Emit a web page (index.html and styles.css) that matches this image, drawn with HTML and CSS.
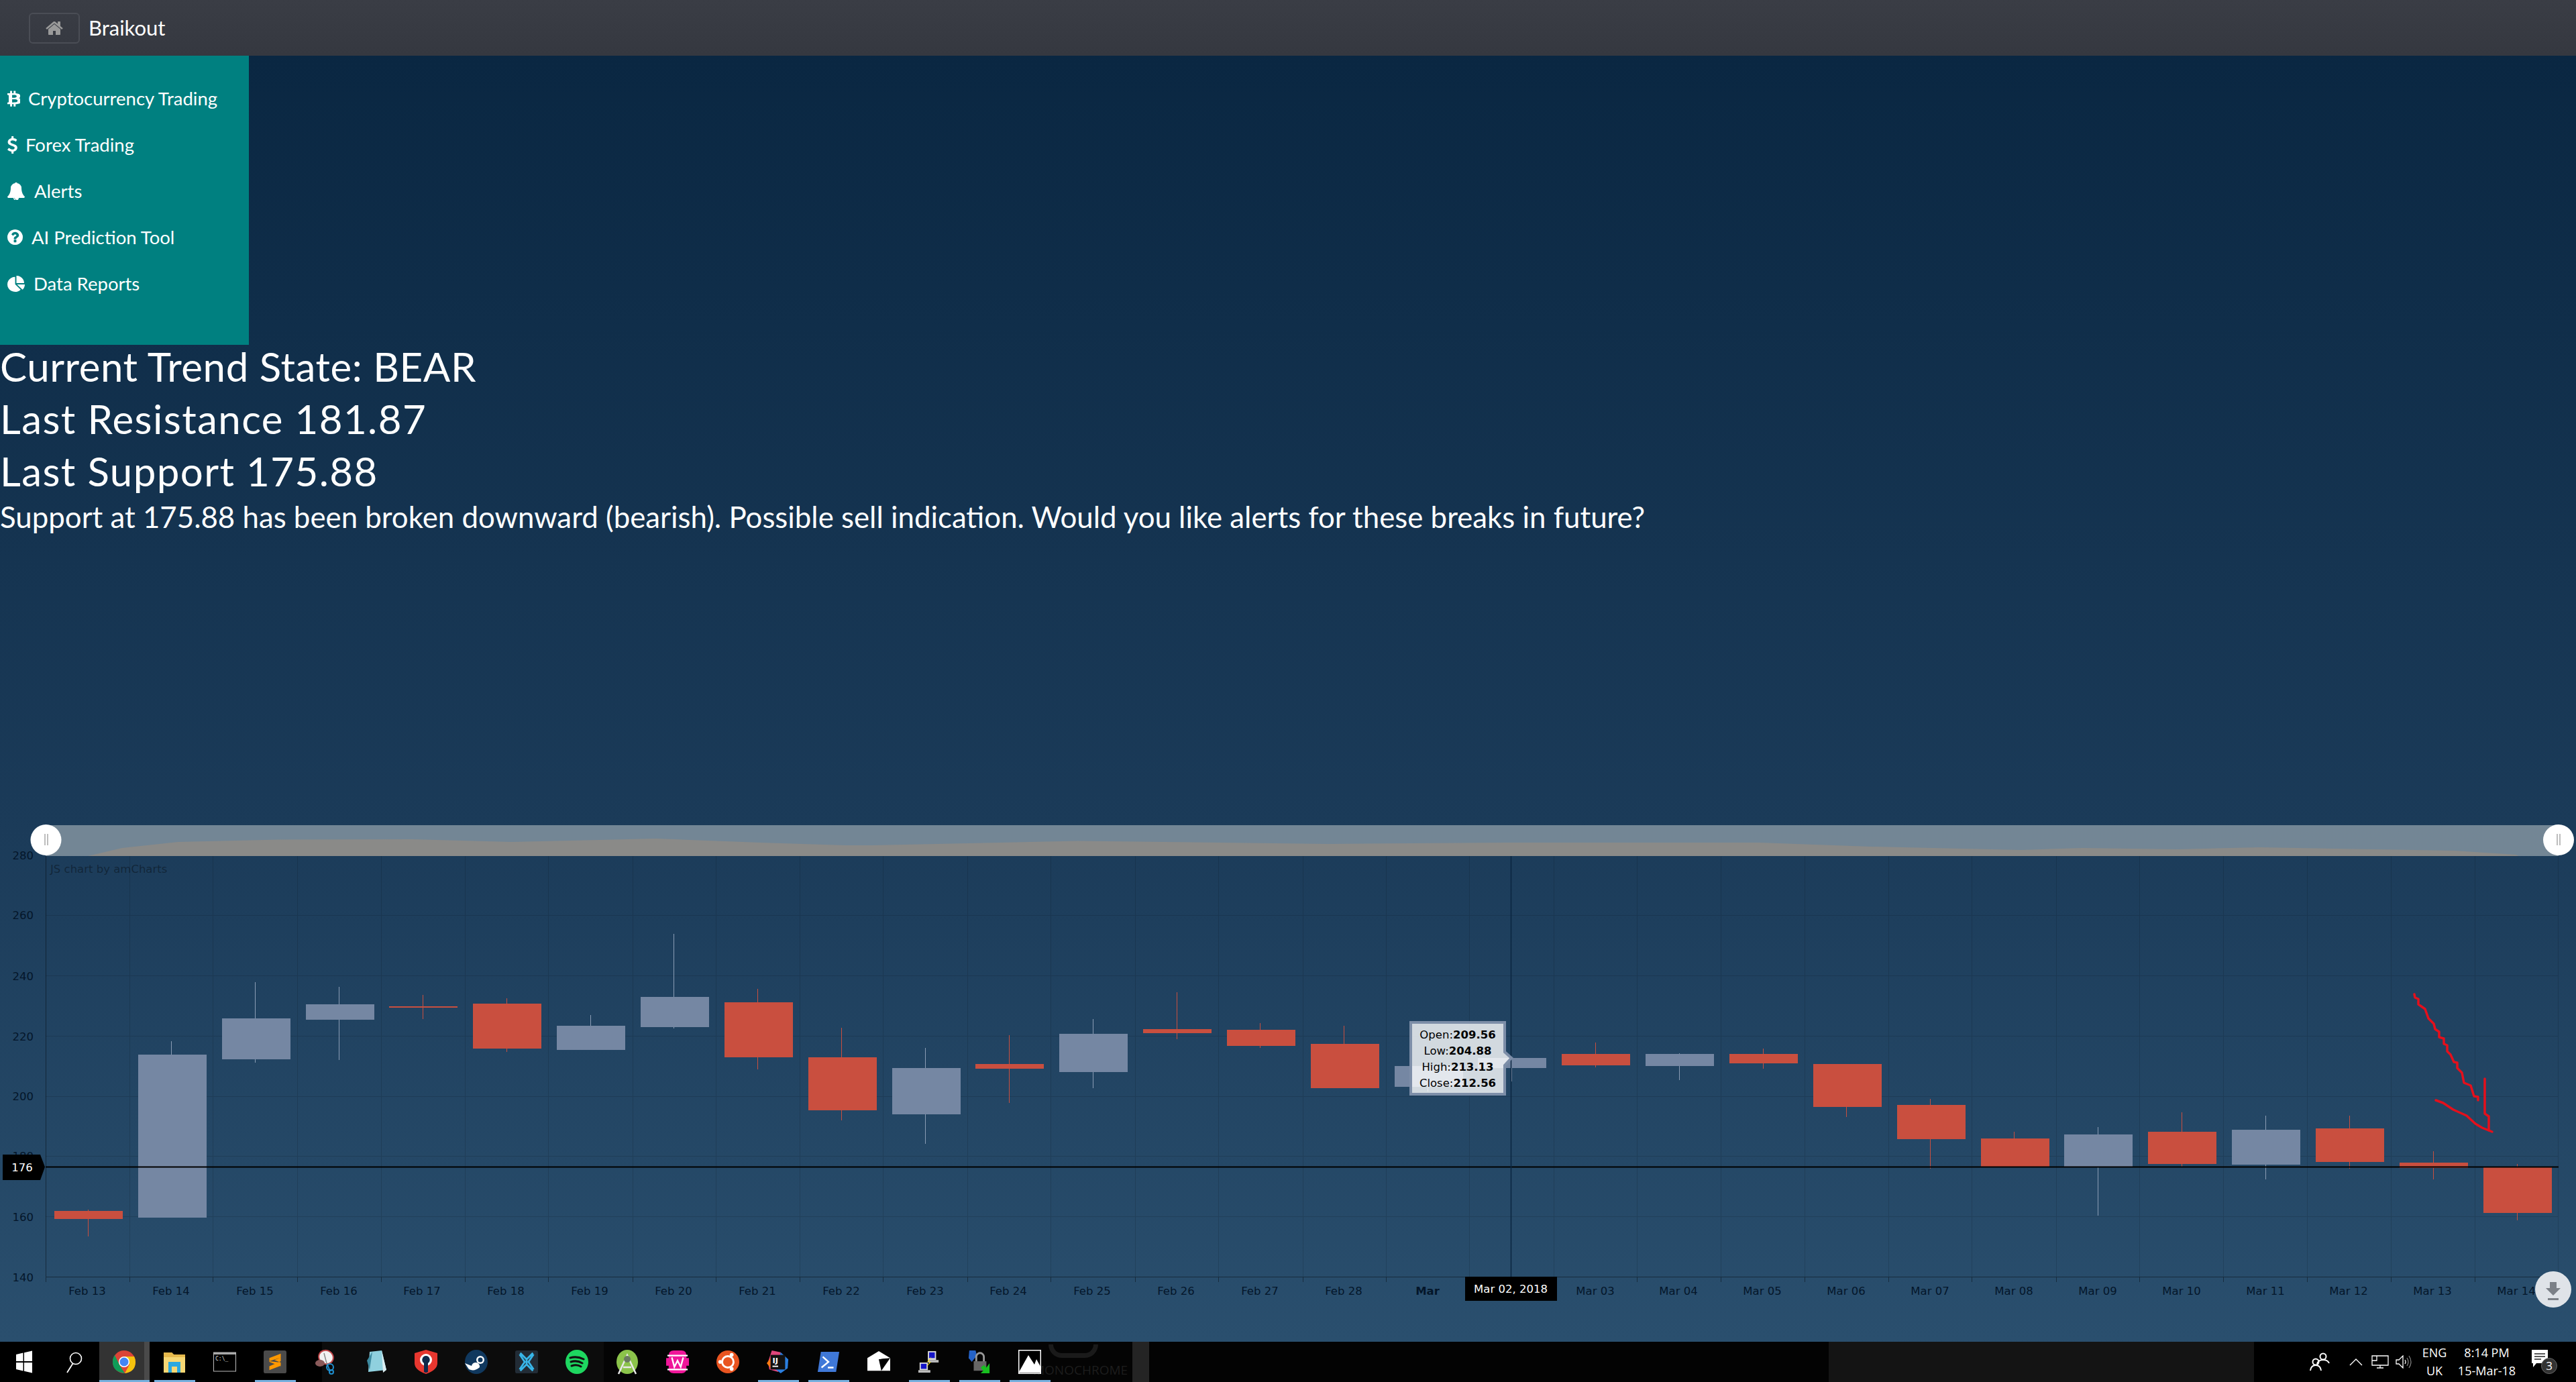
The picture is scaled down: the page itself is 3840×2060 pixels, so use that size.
FILE: index.html
```html
<!DOCTYPE html>
<html lang="en">
<head>
<meta charset="utf-8">
<title>Braikout</title>
<link rel="stylesheet" href="styles.css">
</head>
<body>
<header class="topbar">
  <button class="home-btn"><svg class="home-icon" viewBox="0 0 1792 1792"><path d="M1472 992v480q0 26-19 45t-45 19h-384v-384h-256v384h-384q-26 0-45-19t-19-45v-480q0-1 .5-3t.5-3l575-474 575 474q1 2 1 6zm223-69l-62 74q-8 9-21 11h-3q-13 0-21-7l-692-577-692 577q-12 8-24 7-13-2-21-11l-62-74q-8-10-7-23.500t11-21.500l719-599q32-26 76-26t76 26l244 204v-195q0-14 9-23t23-9h192q14 0 23 9t9 23v408l219 182q10 8 11 21.500t-7 23.500z"/></svg></button>
  <span class="brand">Braikout</span>
</header>

<main class="main">
  <nav class="sidebar">
    <a class="nav-item"><svg class="ico ico-btc" viewBox="150 0 1000 1792" preserveAspectRatio="none"><path d="M1167 621q18 182-131 258 117 28 175 103t45 214q-7 71-32.500 125t-64.500 89-97 58.500-121.500 34.500-145.500 20v255h-154v-251q-80 0-122-1v252h-154v-255q-18 0-54-.5t-55-.5h-200l31-183h111q50 0 58-51v-402h16q-6-1-16-1v-287q-13-68-89-68h-111v-164l212 1q64 0 97-1v-252h154v247q82-2 122-2v-245h154v252q79 7 140 22.500t113 45 82.500 78 36.500 114.500zm-215 545q0-36-15-64t-37-46-57.500-30.500-65.500-18.500-74-9-69-3-64.500 1-47.500 1v338q8 0 37 .5t48 .5 53-1.500 58.500-4 57-8.500 55.500-14 47.500-21 39.500-30 24.500-40 9.500-51zm-71-476q0-33-12.500-58.500t-30.500-42-48-28-55-16.500-61.500-8-58-2.500-54 1-39.500.5v307q5 0 34.500.5t46.500 0 50-2 55-5.500 51.500-11 48.500-18.500 37-27 27-38.500 9-51z"/></svg><span>Cryptocurrency Trading</span></a>
    <a class="nav-item"><svg class="ico ico-usd" viewBox="30 0 960 1792" preserveAspectRatio="none"><path d="M978 1185q0 153-99.500 263.500t-258.500 136.500v175q0 14-9 23t-23 9h-135q-13 0-22.500-9.500t-9.500-22.500v-175q-66-9-127.500-31t-101.500-44.500-74-48-46.500-37.500-17.500-18q-17-21-2-41l103-135q7-10 23-12 15-2 24 9l2 2q113 99 243 125 37 8 74 8 81 0 142.500-43t61.500-122q0-28-15-53t-33.500-42-58.500-37.500-66-32-80-32.500q-39-16-61.500-25t-61.500-26.500-62.500-31-56.500-35.500-53.500-42.500-43.500-49-35.500-58-21-66.500-8.500-78q0-138 98-242t255-134v-180q0-13 9.500-22.500t22.500-9.500h135q14 0 23 9t9 23v176q57 6 110.500 23t87 33.500 63.500 37.500 39 29 15 14q17 18 5 38l-81 146q-8 15-23 16-14 3-27-7-3-3-14.500-12t-39-26.500-58.500-32-74.500-26-85.500-11.500q-95 0-155 43t-60 111q0 26 8.500 48t29.500 41.500 39.500 33 56 31 60.500 27 70 27.500q53 20 81 31.500t76 35 75.500 42.500 62 50 53 63.500 31.500 76.500 13 94z"/></svg><span>Forex Trading</span></a>
    <a class="nav-item"><svg class="ico ico-bell" viewBox="64 64 1664 1664" preserveAspectRatio="none"><path d="M912 1696q0-16-16-16-59 0-101.500-42.500t-42.500-101.500q0-16-16-16t-16 16q0 73 51.500 124.500t124.500 51.500q16 0 16-16zm816-288q0 52-38 90t-90 38h-448q0 106-75 181t-181 75-181-75-75-181h-448q-52 0-90-38t-38-90q50-42 91-88t85-119.500 74.500-158.500 50-206 19.500-260q0-152 117-282.500t307-158.500q-8-19-8-39 0-40 28-68t68-28 68 28 28 68q0 20-8 39 190 28 307 158.500t117 282.500q0 139 19.500 260t50 206 74.500 158.500 85 119.500 91 88z"/></svg><span>Alerts</span></a>
    <a class="nav-item"><svg class="ico ico-q" viewBox="128 128 1536 1536" preserveAspectRatio="none"><path fill-rule="evenodd" d="M1024 1376v-192q0-14-9-23t-23-9h-192q-14 0-23 9t-9 23v192q0 14 9 23t23 9h192q14 0 23-9t9-23zm256-672q0-88-55.500-163t-138.500-116-170-41q-243 0-371 213-15 24 8 42l132 100q7 6 19 6 16 0 25-12 53-68 86-92 34-24 86-24 48 0 85.500 26t37.500 59q0 38-20 61t-68 45q-63 28-115.500 86.500t-52.500 125.500v36q0 14 9 23t23 9h192q14 0 23-9t9-23q0-19 21.500-49.500t54.500-49.500q32-18 49-28.500t46-35 44.500-48 28-60.500 12.500-81zm384 192q0 209-103 385.500t-279.500 279.500-385.500 103-385.500-103-279.500-279.500-103-385.500 103-385.500 279.500-279.500 385.500-103 385.500 103 279.500 279.500 103 385.500z"/></svg><span>AI Prediction Tool</span></a>
    <a class="nav-item"><svg class="ico ico-pie" viewBox="0 0 1728 1664" preserveAspectRatio="none"><path d="M768 890l546 546q-106 108-247.500 168t-298.500 60q-209 0-385.500-103t-279.500-279.500-103-385.500 103-385.500 279.500-279.500 385.500-103v762zm187 6h773q0 157-60 298.500t-168 247.500zm709-128h-768v-768q209 0 385.500 103t279.500 279.500 103 385.500z"/></svg><span>Data Reports</span></a>
  </nav>

  <section class="status">
    <h2 class="status-line">Current Trend State: BEAR</h2>
    <h2 class="status-line status-wide">Last Resistance 181.87</h2>
    <h2 class="status-line status-wide">Last Support 175.88</h2>
    <p class="status-note">Support at 175.88 has been broken downward (bearish). Possible sell indication. Would you like alerts for these breaks in future?</p>
  </section>

  <svg class="chart" viewBox="0 1229 3840 771" width="3840" height="771">
    <!-- grid -->
    <path class="grid" d="M68 1364H3814M68 1454.500H3814M68 1544.500H3814M68 1634.500H3814M68 1723.500H3814M68 1813.500H3814M193 1276V1903M317.500 1276V1903M443.500 1276V1903M568.500 1276V1903M693.500 1276V1903M817.500 1276V1903M943.500 1276V1903M1067.500 1276V1903M1192.500 1276V1903M1316.500 1276V1903M1442.500 1276V1903M1566.500 1276V1903M1692.500 1276V1903M1816.500 1276V1903M1942.500 1276V1903M2066.500 1276V1903M2190.500 1276V1903M2316.500 1276V1903M2440.500 1276V1903M2565.500 1276V1903M2690.500 1276V1903M2815.500 1276V1903M2939.500 1276V1903M3065.500 1276V1903M3189.500 1276V1903M3314.500 1276V1903M3439.500 1276V1903M3564.500 1276V1903M3689.500 1276V1903M3813.500 1276V1903"/>
    <path class="axis" d="M68.500 1276V1903M68 1903.500H3814M68.500 1903V1911M193 1903V1911M317.500 1903V1911M443.500 1903V1911M568.500 1903V1911M693.500 1903V1911M817.500 1903V1911M943.500 1903V1911M1067.500 1903V1911M1192.500 1903V1911M1316.500 1903V1911M1442.500 1903V1911M1566.500 1903V1911M1692.500 1903V1911M1816.500 1903V1911M1942.500 1903V1911M2066.500 1903V1911M2190.500 1903V1911M2316.500 1903V1911M2440.500 1903V1911M2565.500 1903V1911M2690.500 1903V1911M2815.500 1903V1911M2939.500 1903V1911M3065.500 1903V1911M3189.500 1903V1911M3314.500 1903V1911M3439.500 1903V1911M3564.500 1903V1911M3689.500 1903V1911"/>

    <!-- candles -->
    <g class="bull">
      <path class="wick" d="M255.500 1552V1573M380.500 1464V1584M505.500 1471V1580M880.500 1513V1530M1004.500 1392V1533M1379.500 1562V1705M1629.500 1519V1622M2128.500 1588V1627M2253.500 1577V1612M2503.500 1570V1610M3127.500 1680V1812M3377.500 1663V1758"/>
      <path class="body" d="M206 1572h102V1815h-102zM331 1518h102V1579h-102zM456 1497h102V1520h-102zM830 1529h102V1565h-102zM955 1486h102V1531h-102zM1330 1592h102V1661h-102zM1579 1541h102V1598h-102zM2079 1589h102V1620h-102zM2203 1577h102V1592h-102zM2453 1571h102V1589h-102zM3077 1691h102V1739h-102zM3327 1684h102V1736h-102z"/>
    </g>
    <g class="bear">
      <path class="wick" d="M131.500 1803V1843M630.500 1483V1519M755.500 1488V1568M1129.500 1474V1594M1254.500 1532V1670M1504.500 1543V1644M1754.500 1479V1549M1878.500 1525V1562M2003.500 1529V1556M2378.500 1554V1591M2628.500 1563V1593M2752.500 1586V1665M2877.500 1638V1742M3002.500 1687V1739M3252.500 1658V1739M3502.500 1663V1742M3627.500 1716V1758M3752.500 1735V1819"/>
      <path class="body" d="M81 1805h102V1817h-102zM580 1500h102V1502h-102zM705 1496h102V1563h-102zM1080 1494h102V1576h-102zM1205 1576h102V1655h-102zM1454 1586h102V1593h-102zM1704 1534h102V1540h-102zM1829 1535h102V1559h-102zM1954 1556h102V1622h-102zM2328 1571h102V1588h-102zM2578 1571h102V1585h-102zM2703 1586h102V1650h-102zM2828 1647h102V1698h-102zM2953 1697h102V1739h-102zM3202 1687h102V1735h-102zM3452 1682h102V1732h-102zM3577 1733h102V1741h-102zM3702 1740h102V1808h-102z"/>
    </g>

    <!-- hand-drawn arrow -->
    <g class="arrow">
      <path d="M3599 1482L3600 1487L3605 1489L3605 1497L3615 1504L3620 1518L3628 1526L3630 1534L3636 1538L3636 1546L3643 1548L3643 1556L3648 1558L3648 1567L3653 1572L3658 1583L3663 1584L3663 1592L3670 1599L3673 1614L3683 1618L3688 1634L3694 1635L3694 1640"/>
      <path d="M3631 1640L3642 1644L3657 1654L3677 1663L3690 1675L3700 1681L3715 1687"/>
      <path d="M3704 1608L3704 1660L3710 1664L3710 1685"/>
    </g>

    <!-- level line and value tag -->
    <path class="level" d="M68 1739.500H3814"/>
    <text class="y-label" x="50" y="1281">280</text>
    <text class="y-label" x="50" y="1370">260</text>
    <text class="y-label" x="50" y="1461">240</text>
    <text class="y-label" x="50" y="1551">220</text>
    <text class="y-label" x="50" y="1640">200</text>
    <text class="y-label" x="50" y="1729">180</text>
    <text class="y-label" x="50" y="1820">160</text>
    <text class="y-label" x="50" y="1910">140</text>
    <path class="tag" d="M4 1721H60L67 1739.500L60 1759H4z"/>
    <text class="tag-text" x="33" y="1746">176</text>

    <text class="credit" x="75" y="1301">JS chart by amCharts</text>

    <!-- x axis labels -->
    <g class="x-labels">
      <text x="130" y="1930">Feb 13</text><text x="255" y="1930">Feb 14</text><text x="380" y="1930">Feb 15</text><text x="505" y="1930">Feb 16</text><text x="629" y="1930">Feb 17</text><text x="754" y="1930">Feb 18</text><text x="879" y="1930">Feb 19</text><text x="1004" y="1930">Feb 20</text><text x="1129" y="1930">Feb 21</text><text x="1254" y="1930">Feb 22</text><text x="1379" y="1930">Feb 23</text><text x="1503" y="1930">Feb 24</text><text x="1628" y="1930">Feb 25</text><text x="1753" y="1930">Feb 26</text><text x="1878" y="1930">Feb 27</text><text x="2003" y="1930">Feb 28</text>
      <text class="x-strong" x="2128" y="1930">Mar</text>
      <text x="2378" y="1930">Mar 03</text><text x="2502" y="1930">Mar 04</text><text x="2627" y="1930">Mar 05</text><text x="2752" y="1930">Mar 06</text><text x="2877" y="1930">Mar 07</text><text x="3002" y="1930">Mar 08</text><text x="3127" y="1930">Mar 09</text><text x="3252" y="1930">Mar 10</text><text x="3377" y="1930">Mar 11</text><text x="3501" y="1930">Mar 12</text><text x="3626" y="1930">Mar 13</text><text x="3751" y="1930">Mar 14</text>
    </g>

    <!-- cursor -->
    <path class="cursor" d="M2252.500 1276V1903"/>
    <rect class="date-tag" x="2184" y="1903" width="137" height="36"/>
    <text class="date-text" x="2252" y="1927">Mar 02, 2018</text>

    <!-- balloon -->
    <path class="balloon" d="M2103 1524H2243V1568L2253 1577L2243 1588V1631H2103z"/>
    <g class="balloon-text">
      <text x="2173" y="1548">Open:<tspan class="b">209.56</tspan></text>
      <text x="2173" y="1572">Low:<tspan class="b">204.88</tspan></text>
      <text x="2173" y="1596">High:<tspan class="b">213.13</tspan></text>
      <text x="2173" y="1620">Close:<tspan class="b">212.56</tspan></text>
    </g>

    <!-- scrollbar -->
    <rect class="scroll-bg" x="68" y="1230" width="3746" height="46"/>
    <path class="scroll-graph" d="M131 1276L182 1264L265 1255L415 1251.500L614 1251L763 1255L978 1250L1134 1256L1260 1260L1300 1260L1607 1253.500L1980 1258L2245 1256L2623 1256L2789 1262L3013 1267L3104 1264L3245 1266L3369 1263L3535 1266L3659 1268L3750 1274L3755 1276z"/>
    <circle class="handle" cx="68.500" cy="1252" r="23"/>
    <path class="grip" d="M67 1243V1260M71 1243V1260"/>
    <circle class="handle" cx="3814" cy="1252" r="23"/>
    <path class="grip" d="M3812 1243V1260M3816 1243V1260"/>

    <!-- export button -->
    <circle class="export" cx="3806" cy="1922" r="27"/>
    <path class="export-glyph" d="M3801 1911h10v9h6l-11 11-11-11h6zM3798 1935h16v3h-16z"/>
  </svg>
</main>

<footer class="taskbar">
  <span class="wall-arc"></span>
  <span class="wall-text">MONOCHROME</span>
  <div class="slot slot-start"><svg class="tb" viewBox="0 0 24 36" preserveAspectRatio="none"><path fill="#fff" d="M0 7L10.500 4.500V17H0zM12 4.200L24 1.500V17H12zM0 19H10.500V31.500L0 29zM12 19H24V34.500L12 31.800z"/></svg></div>
  <div class="slot slot-search"><svg class="tb" viewBox="0 0 28 36"><circle cx="17" cy="13" r="8.500" fill="none" stroke="#fff" stroke-width="1.600"/><path d="M12.500 20.500L4 34" stroke="#fff" stroke-width="1.800"/></svg></div>
  <div class="slot slot-chrome on"><svg class="tb" viewBox="0 0 34 36"><circle cx="17" cy="18" r="17" fill="#db4437"/><path fill="#0f9d58" d="M3 8L11 24L18 35Q0 33 0 18Q0 12 3 8z"/><path fill="#f4c20d" d="M17 10H32Q34 14 34 18Q34 33 18 35L25 22z"/><circle cx="17" cy="18" r="8" fill="#fff"/><circle cx="17" cy="18" r="6.500" fill="#4285f4"/></svg></div>
  <div class="slot on"><svg class="tb" viewBox="0 0 34 36"><path fill="#f6d774" d="M1 4h12l3 3h17v27H1z"/><path fill="#e6b94c" d="M1 4h12l3 3h17v4H1z"/><path fill="#29a8e0" d="M8 18h18v16h-5v-9h-8v9H8z"/></svg></div>
  <div class="slot"><svg class="tb" viewBox="0 0 34 36"><rect x=".5" y="4" width="33" height="28" fill="#000" stroke="#bdbdbd"/><rect x="1" y="4" width="32" height="3" fill="#aaa"/><text class="cmd-text" x="3" y="16">C:\_</text></svg></div>
  <div class="slot on"><svg class="tb" viewBox="0 0 36 36"><rect width="36" height="36" rx="3" fill="#4a4a4a"/><path fill="#ff9800" d="M27 5L9 12V18L27 25V19L17 15L27 11zM9 17L27 11V17L9 25V31L27 24V19z"/></svg></div>
  <div class="slot"><svg class="tb" viewBox="0 0 34 36"><ellipse cx="18" cy="11" rx="11" ry="10" fill="#f2f2f2" stroke="#c0474a" stroke-width="2" transform="rotate(25 18 11)"/><path stroke="#888" stroke-width="1.500" d="M15 5L20 24"/><ellipse cx="9" cy="20" rx="7" ry="5" fill="#8a5a5a"/><path d="M20 22L24 32" stroke="#1f8fd0" stroke-width="2"/><circle cx="24" cy="26" r="5" fill="none" stroke="#1f8fd0" stroke-width="2"/><circle cx="26" cy="33" r="3" fill="none" stroke="#1f8fd0" stroke-width="2"/></svg></div>
  <div class="slot"><svg class="tb" viewBox="0 0 34 36"><path fill="#8fd0de" d="M8 3L26 1L33 30L6 33z"/><path fill="#3d8aa0" d="M4 16L12 3L8 30z"/><path fill="#dbeef2" d="M26 1L33 30L28 34z"/></svg></div>
  <div class="slot"><svg class="tb" viewBox="0 0 34 36"><path fill="#e8372f" d="M17 0L34 5V20Q34 30 17 36Q0 30 0 20V5z"/><circle cx="17" cy="15" r="9" fill="#fff"/><path fill="#10284a" d="M17 9A6 6 0 0 1 20 20V33Q17 35 14 33V20A6 6 0 0 1 17 9z"/></svg></div>
  <div class="slot"><svg class="tb" viewBox="0 0 34 36"><ellipse cx="17" cy="18" rx="17" ry="18" fill="#10385e"/><path fill="#fff" d="M0 20L10 24A6 6 0 0 1 22 26Q14 33 6 29z"/><circle cx="23" cy="15" r="6" fill="#fff"/><circle cx="23" cy="15" r="3.500" fill="#10385e"/></svg></div>
  <div class="slot"><svg class="tb" viewBox="0 0 36 36"><rect width="36" height="36" rx="3" fill="#222c36"/><path fill="none" stroke="#38b6e8" stroke-width="3" d="M8 4L18 14L28 4M8 32L18 22L28 32M18 14V22M7 6L15 18L7 30M29 6L21 18L29 30"/></svg></div>
  <div class="slot"><svg class="tb" viewBox="0 0 34 36"><ellipse cx="17" cy="18" rx="17" ry="18" fill="#1ed760"/><path fill="none" stroke="#111" stroke-width="3" stroke-linecap="round" d="M7 12Q17 9 27 14M8 18Q17 15 25 20M9 24Q17 21 23 25"/></svg></div>
  <div class="slot"><svg class="tb" viewBox="0 0 34 36"><ellipse cx="17" cy="18" rx="16" ry="18" fill="#8bc34a"/><path fill="none" stroke="#e8e8e8" stroke-width="2.500" d="M4 36L17 8L30 36M11 26H23"/><circle cx="17" cy="14" r="5" fill="#6a7a60"/></svg></div>
  <div class="slot"><svg class="tb" viewBox="0 0 36 36"><path fill="#f0169a" d="M4 8Q4 0 12 0H24Q32 0 32 8V28Q32 36 24 36H12Q4 36 4 28z"/><path fill="#f0169a" d="M0 12H36V24H0z"/><path fill="none" stroke="#fff" stroke-width="2.500" d="M9 11L13 26L18 16L23 26L27 11M2 8H34M2 30H34"/></svg></div>
  <div class="slot"><svg class="tb" viewBox="0 0 36 36"><circle cx="18" cy="18" r="18" fill="#e95420"/><circle cx="18" cy="18" r="9" fill="none" stroke="#fff" stroke-width="3"/><circle cx="6" cy="18" r="3" fill="#fff"/><circle cx="24" cy="7" r="3" fill="#fff"/><circle cx="24" cy="29" r="3" fill="#fff"/></svg></div>
  <div class="slot on"><svg class="tb" viewBox="0 0 36 36"><path fill="#e0457b" d="M2 18L8 0L22 3L18 34L4 30z"/><path fill="#2b7fe0" d="M22 3L34 14L33 28L22 36L14 30z"/><path fill="#f97a12" d="M0 20L6 12V28z"/><rect x="6" y="7" width="23" height="23" fill="#111"/><text class="ij-text" x="9" y="20">IJ</text><rect x="9" y="24" width="9" height="2" fill="#fff"/></svg></div>
  <div class="slot on"><svg class="tb" viewBox="0 0 36 36"><path fill="#3f78d8" d="M6 2H35L30 34H1z"/><path fill="none" stroke="#fff" stroke-width="2.500" d="M9 10L18 18L7 27M17 27H26"/></svg></div>
  <div class="slot"><svg class="tb" viewBox="0 0 36 36"><path fill="#fff" d="M0 12L18 1L36 12V32H0z"/><path fill="#000" d="M18 14L36 12L22 32z"/><path fill="#000" d="M18 14L30 12.500L24 22z"/></svg></div>
  <div class="slot on"><svg class="tb" viewBox="0 0 36 36"><rect x="16" y="1" width="13" height="14" fill="#d8d8d8"/><rect x="18" y="3" width="9" height="9" fill="#1414c8"/><rect x="16" y="15" width="17" height="4" fill="#bbb"/><rect x="3" y="19" width="13" height="12" fill="#d8d8d8"/><rect x="5" y="21" width="9" height="8" fill="#1414c8"/><rect x="1" y="31" width="19" height="4" fill="#bbb"/><path fill="#ffe91a" d="M22 9L17 18H21L13 27L19 18H15z"/></svg></div>
  <div class="slot on"><svg class="tb" viewBox="0 0 36 36"><path fill="#2563c8" d="M2 0H12L14 8L6 18L1 12z"/><path fill="none" stroke="#999" stroke-width="3" d="M13 18V10A6 6 0 0 1 25 10V18"/><rect x="9" y="17" width="20" height="15" fill="#666"/><path fill="#18c020" d="M34 20V36H20L24 32L20 27L25 23L29 27z"/></svg></div>
  <div class="slot on"><svg class="tb" viewBox="0 0 34 36"><rect width="34" height="36" fill="#fff"/><rect x="1.500" y="1.500" width="31" height="33" fill="#000"/><path fill="#fff" d="M1 33L15 8L24 22L27 14L33 25V34H1z"/></svg></div>

  <div class="tray">
    <svg class="t-people" viewBox="0 0 30 30"><g fill="none" stroke="#fff" stroke-width="2"><circle cx="20" cy="7" r="4.500"/><path d="M11 18Q13 12 20 12Q27 12 29 17"/><circle cx="9" cy="15" r="4.500"/><path d="M1 28Q2 20 9 20Q16 20 17 28"/></g></svg>
    <svg class="t-chev" viewBox="0 0 20 12"><path fill="none" stroke="#fff" stroke-width="1.400" d="M1 11L10 2L19 11"/></svg>
    <svg class="t-net" viewBox="0 0 26 20"><g fill="none" stroke="#fff" stroke-width="1.300"><path d="M7 1H25V15H1V1H8V8H1M13 15V19M8 19H18"/></g></svg>
    <svg class="t-vol" viewBox="0 0 24 20"><path fill="none" stroke="#fff" stroke-width="1.300" d="M1 7H5L11 1V19L5 13H1zM14 7Q16 10 14 13"/><path fill="none" stroke="#888" stroke-width="1.200" d="M17 4Q21 10 17 16M20 1Q26 10 20 19"/></svg>
    <div class="t-lang"><span>ENG</span><span>UK</span></div>
    <div class="t-clock"><span>8:14 PM</span><span>15-Mar-18</span></div>
    <div class="t-notif"><svg class="t-bubble" viewBox="0 0 36 36"><path fill="#fff" d="M8 4H32V24H15L10 30V24H8z" transform="translate(-6 -4)"/><path stroke="#222" stroke-width="1.300" d="M6 6H22M6 10H22M6 14H16"/></svg><span class="t-badge">3</span></div>
  </div>
</footer>
</body>
</html>
```

FILE: styles.css
```css
* { box-sizing: border-box; }
html, body { margin: 0; padding: 0; }
body {
  width: 3840px;
  height: 2060px;
  overflow: hidden;
  display: flex;
  flex-direction: column;
  background: #0a2742;
  font-family: "Lato", "Open Sans", sans-serif;
  color: #fff;
}

/* top bar */
.topbar {
  height: 83px;
  flex: none;
  display: flex;
  align-items: center;
  padding-left: 43px;
  background: linear-gradient(#3a3d45, #353840);
}
.home-btn {
  width: 76px;
  height: 46px;
  padding: 0;
  display: flex;
  align-items: center;
  justify-content: center;
  background: transparent;
  border: 2px solid #4a4d55;
  border-radius: 6px;
}
.home-icon { width: 30px; height: 28px; fill: #9a9a9a; }
.brand { margin-left: 13px; font-size: 31px; line-height: 36px; margin-top: -2px; color: #fff; }

/* main */
.main {
  flex: 1;
  min-height: 0;
  display: flex;
  flex-direction: column;
  background: linear-gradient(#0a2742 0%, #1b3b59 60%, #2a4f6e 100%);
}
.sidebar {
  width: 371px;
  height: 431px;
  flex: none;
  padding-top: 29px;
  background: #008080;
  display: flex;
  flex-direction: column;
}
.nav-item {
  height: 69px;
  display: flex;
  align-items: center;
  padding-left: 11px;
  font-size: 27.500px;
  color: #fff;
}
.ico { fill: #fff; flex: none; }
.ico-btc { width: 19px; height: 25px; margin-right: 12px; }
.ico-usd { width: 15px; height: 26px; margin-right: 12px; }
.ico-bell { width: 26px; height: 26px; margin-right: 14px; }
.ico-q { width: 23px; height: 23px; margin-right: 13px; }
.ico-pie { width: 26px; height: 24px; margin-right: 13px; }

.status { flex: none; }
.status-line {
  margin: 0 0 14px;
  font-size: 60px;
  line-height: 64px;
  font-weight: 400;
  letter-spacing: .56px;
  color: #fff;
}
.status-wide { letter-spacing: 1.400px; }
.status-note {
  margin: 0;
  font-size: 43.800px;
  line-height: 44px;
  color: #fff;
}

/* chart */
.chart { display: block; margin-top: auto; flex: none; }
.grid { stroke: rgba(0, 0, 0, .13); stroke-width: 1; fill: none; shape-rendering: crispEdges; }
.axis { stroke: rgba(0, 0, 0, .42); stroke-width: 1; fill: none; shape-rendering: crispEdges; }
.bull .body { fill: #7587a3; }
.bull .wick { stroke: #8b9db5; stroke-width: 1; fill: none; shape-rendering: crispEdges; }
.bear .body { fill: #c94f3f; }
.bear .wick { stroke: #c94f3f; stroke-width: 1; fill: none; shape-rendering: crispEdges; }
.arrow path { fill: none; stroke: #e4101c; stroke-width: 3.500; stroke-linejoin: round; stroke-linecap: round; }
.level { stroke: #000; stroke-width: 2; fill: none; }
.y-label { font: 16.500px "DejaVu Sans", sans-serif; fill: #04162a; text-anchor: end; }
.tag { fill: #000; }
.tag-text { font: 16.500px "DejaVu Sans", sans-serif; fill: #fff; text-anchor: middle; }
.credit { font: 16.500px "DejaVu Sans", sans-serif; fill: rgba(0, 0, 0, .38); }
.x-labels text { font: 16.500px "DejaVu Sans", sans-serif; fill: #04162a; text-anchor: middle; }
.x-labels .x-strong { font-weight: 700; }
.cursor { stroke: #0b2640; stroke-width: 1.500; fill: none; }
.date-tag { fill: #000; }
.date-text { font: 16.500px "DejaVu Sans", sans-serif; fill: #fff; text-anchor: middle; }
.balloon { fill: rgba(255, 255, 255, .8); stroke: #7d8ea8; stroke-width: 4; }
.balloon-text text { font: 16.500px "DejaVu Sans", sans-serif; fill: #000; text-anchor: middle; }
.balloon-text .b { font-weight: 700; }
.scroll-bg { fill: #738695; }
.scroll-graph { fill: #8a8a88; }
.handle { fill: #fff; }
.grip { stroke: #a8a8a8; stroke-width: 1.500; fill: none; }
.export { fill: #dfe3e8; }
.export-glyph { fill: #7b8087; }

/* taskbar */
.taskbar {
  position: relative;
  height: 60px;
  flex: none;
  display: flex;
  align-items: stretch;
  background: linear-gradient(to right, #000 0, #000 480px, #0c0c0c 480px, #0c0c0c 900px, #040404 900px, #040404 1688px, #242424 1688px, #242424 1713px, #030303 1713px, #030303 2726px, #141414 2726px, #141414 3360px, #000 3360px);
}
.wall-arc {
  position: absolute;
  left: 1563px;
  top: 4px;
  width: 74px;
  height: 20px;
  border: 7px solid #1a1a1a;
  border-top: 0;
  border-radius: 0 0 37px 37px;
}
.wall-text {
  position: absolute;
  left: 1540px;
  top: 29px;
  font-size: 19px;
  line-height: 26px;
  color: #1d1d1d;
  font-family: "Open Sans", sans-serif;
}
.slot {
  position: relative;
  width: 75px;
  flex: none;
  display: flex;
  align-items: center;
  justify-content: center;
}
.slot-start { width: 72px; }
.slot-search { width: 75.500px; }
.slot-chrome { background: linear-gradient(to right, #333 0, #333 67px, #4a4a4a 67px); }
.slot.on::after {
  content: "";
  position: absolute;
  left: 7px;
  right: 7px;
  bottom: 0;
  height: 3px;
  background: #76b0de;
}
.slot-chrome.on::after { left: 0; right: 0; }
.tb { width: 34px; height: 36px; overflow: visible; }
.slot-start .tb { width: 24px; height: 36px; }
.cmd-text { font: 8px "DejaVu Sans Mono", monospace; fill: #ddd; }
.ij-text { font: 700 12px "DejaVu Sans", sans-serif; fill: #fff; }

.tray {
  margin-left: auto;
  padding-right: 32px;
  display: flex;
  align-items: center;
  font-family: "Open Sans", sans-serif;
  font-size: 18px;
  color: #fff;
}
.t-people { width: 30px; height: 30px; }
.t-chev { width: 20px; height: 12px; margin-left: 29px; }
.t-net { width: 26px; height: 20px; margin-left: 13px; }
.t-vol { width: 24px; height: 20px; margin-left: 10px; }
.t-lang { width: 40px; margin-left: 14px; display: flex; flex-direction: column; align-items: center; line-height: 27px; }
.t-clock { width: 90px; margin-left: 13px; display: flex; flex-direction: column; align-items: center; line-height: 27px; }
.t-notif { position: relative; width: 36px; height: 36px; margin-left: 20px; }
.t-bubble { width: 36px; height: 36px; }
.t-badge {
  position: absolute;
  left: 16px;
  top: 12px;
  width: 24px;
  height: 24px;
  border-radius: 50%;
  background: #333;
  border: 1px solid #666;
  font-size: 17px;
  line-height: 22px;
  text-align: center;
}
```
